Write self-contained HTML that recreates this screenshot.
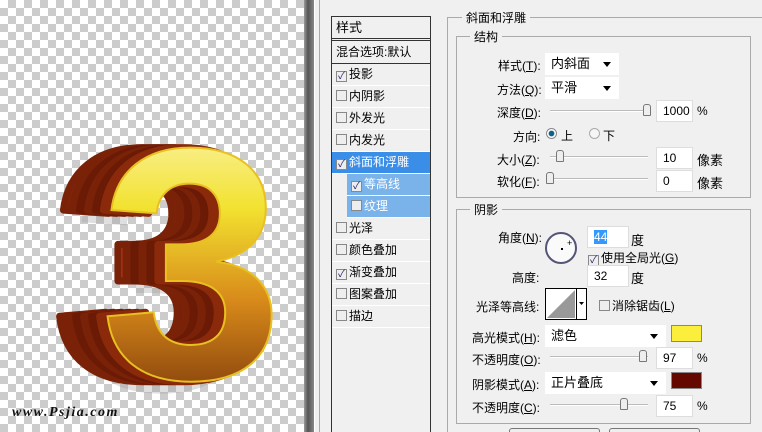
<html><head><style>
*{margin:0;padding:0;box-sizing:border-box}
body{width:762px;height:432px;overflow:hidden;position:relative;background:#f0f0f0;font-family:"Liberation Sans","Noto Sans CJK SC",sans-serif;font-size:12px;color:#000}
.chk{position:absolute;left:0;top:0;width:304px;height:432px;background-color:#fff;background-image:linear-gradient(45deg,#ccc 25%,transparent 25%,transparent 75%,#ccc 75%),linear-gradient(45deg,#ccc 25%,transparent 25%,transparent 75%,#ccc 75%);background-size:16px 16px;background-position:0 0,8px 8px}
.a{position:absolute;white-space:nowrap}
.list{position:absolute;left:331px;top:16px;width:100px;height:416px;border:1px solid #333;border-bottom:none;background:#f0f0f0}
.row{position:absolute;left:0;width:98px;height:22px;border-bottom:1px solid #fff;line-height:21px;padding-left:4px;font-size:12px}
.cb{display:inline-block;width:11px;height:11px;border:1px solid #888;background:#eee;vertical-align:-1px;margin-right:2px;font-size:10px;line-height:9px;text-align:center;color:#226}
.fs{position:absolute;border:1px solid #aaa}
.lg{position:absolute;background:#f0f0f0;padding:0 4px;font-size:12px}
.in{position:absolute;background:#fff;border:1px solid #ddd;height:22px;line-height:20px;padding-left:6px}
.sel{position:absolute;background:#fff;height:22px;line-height:21px;padding-left:6px;font-size:13px}
.sel:after{content:"";position:absolute;right:8px;top:9px;border:4px solid transparent;border-top:5px solid #000}
.sl{position:absolute;height:2px;background:#bbb;border-bottom:1px solid #fff}
.th{position:absolute;width:8px;height:12px;background:#eee;border:1px solid #777;border-radius:3px 3px 1px 1px}
</style></head><body>
<div class="chk"></div>
<svg class="a" style="left:0;top:0" width="304" height="432" font-family="Liberation Sans" font-weight="bold" font-size="330">
<defs>
<linearGradient id="f" x1="0" y1="0" x2="0" y2="1"><stop offset="0" stop-color="#fffbe0"/><stop offset=".35" stop-color="#f2e230"/><stop offset=".6" stop-color="#d88a1a"/><stop offset="1" stop-color="#5a1a05"/></linearGradient>
<linearGradient id="s" x1="0" y1="0" x2="1" y2="0"><stop offset="0" stop-color="#6a1505"/><stop offset=".3" stop-color="#d0401a"/><stop offset="1" stop-color="#3a0800"/></linearGradient>
</defs>
<text x="70" y="390" fill="#999" opacity=".3">3</text>
<g stroke-width="7" stroke-linejoin="round">
<text x="52" y="378" fill="url(#s)" stroke="#7a2208">3</text>
<text x="60" y="378" fill="#7a2208" stroke="#7a2208">3</text>
<text x="68" y="378" fill="#6a1a05" stroke="#6a1a05">3</text>
<text x="76" y="378" fill="#7a2208" stroke="#7a2208">3</text>
<text x="84" y="378" fill="#6a1a05" stroke="#6a1a05">3</text>
<text x="92" y="378" fill="#8a2a0a" stroke="#8a2a0a">3</text>
</g>
<text x="100" y="378" fill="url(#f)" stroke="#e8c020" stroke-width="2">3</text>
<text x="12" y="416" font-family="Liberation Serif" font-style="italic" font-size="14" fill="#111" letter-spacing="1.5">www.Psjia.com</text>
</svg>
<div class="a" style="left:304px;top:0;width:10px;height:432px;background:linear-gradient(90deg,#999,#555 40%,#888)"></div>
<div class="a" style="left:314px;top:0;width:448px;height:432px;background:#f0f0f0;border-left:1px solid #fff"></div>
<div class="a" style="left:319px;top:0;width:1px;height:432px;background:#aaa"></div>
<div class="list">
<div class="row" style="top:0;height:24px;border-bottom:3px double #333;font-size:13px;line-height:22px">样式</div>
<div class="row" style="top:25px;border-bottom:1px solid #333">混合选项:默认</div>
<div class="row" style="top:47px"><span class="cb">✓</span>投影</div>
<div class="row" style="top:69px"><span class="cb"></span>内阴影</div>
<div class="row" style="top:91px"><span class="cb"></span>外发光</div>
<div class="row" style="top:113px"><span class="cb"></span>内发光</div>
<div class="row" style="top:135px;background:#3a8ee8;color:#fff"><span class="cb">✓</span>斜面和浮雕</div>
<div class="row" style="top:157px;left:15px;width:83px;background:#7ab2ea;color:#fff"><span class="cb">✓</span>等高线</div>
<div class="row" style="top:179px;left:15px;width:83px;background:#7ab2ea;color:#fff"><span class="cb"></span>纹理</div>
<div class="row" style="top:201px"><span class="cb"></span>光泽</div>
<div class="row" style="top:223px"><span class="cb"></span>颜色叠加</div>
<div class="row" style="top:245px"><span class="cb">✓</span>渐变叠加</div>
<div class="row" style="top:267px"><span class="cb"></span>图案叠加</div>
<div class="row" style="top:289px"><span class="cb"></span>描边</div>
</div>
<div class="fs" style="left:447px;top:17px;width:315px;height:415px;border-right:none;border-bottom:none"></div>
<div class="lg" style="left:462px;top:9px">斜面和浮雕</div>
<div class="fs" style="left:456px;top:36px;width:295px;height:162px"></div>
<div class="lg" style="left:470px;top:28px">结构</div>
<div class="a" style="left:498px;top:57px">样式(<u>T</u>):</div>
<div class="sel" style="left:545px;top:53px;width:74px">内斜面</div>
<div class="a" style="left:497px;top:81px">方法(<u>Q</u>):</div>
<div class="sel" style="left:545px;top:77px;width:74px">平滑</div>
<div class="a" style="left:497px;top:104px">深度(<u>D</u>):</div>
<div class="sl" style="left:550px;top:110px;width:100px"></div><div class="th" style="left:643px;top:104px"></div>
<div class="in" style="left:656px;top:100px;width:37px">1000</div><div class="a" style="left:697px;top:104px">%</div>
<div class="a" style="left:513px;top:128px">方向:</div>
<div class="a" style="left:546px;top:128px;width:11px;height:11px;border-radius:50%;border:1px solid #888;background:radial-gradient(#13608a 40%,#fff 50%)"></div><div class="a" style="left:561px;top:127px">上</div>
<div class="a" style="left:589px;top:128px;width:11px;height:11px;border-radius:50%;border:1px solid #aaa;background:#f6f6f6"></div><div class="a" style="left:603px;top:127px">下</div>
<div class="a" style="left:497px;top:151px">大小(<u>Z</u>):</div>
<div class="sl" style="left:550px;top:156px;width:98px"></div><div class="th" style="left:556px;top:150px"></div>
<div class="in" style="left:656px;top:147px;width:37px">10</div><div class="a" style="left:697px;top:150px;font-size:13px">像素</div>
<div class="a" style="left:497px;top:173px">软化(<u>F</u>):</div>
<div class="sl" style="left:550px;top:178px;width:98px"></div><div class="th" style="left:546px;top:172px"></div>
<div class="in" style="left:656px;top:170px;width:37px">0</div><div class="a" style="left:697px;top:173px;font-size:13px">像素</div>
<div class="fs" style="left:456px;top:209px;width:295px;height:215px"></div>
<div class="lg" style="left:470px;top:201px">阴影</div>
<div class="a" style="left:498px;top:229px">角度(<u>N</u>):</div>
<div class="a" style="left:545px;top:232px;width:32px;height:32px;border-radius:50%;border:2px solid #557;background:#fafafa"></div>
<div class="a" style="left:561px;top:248px;width:2px;height:2px;background:#000"></div><div class="a" style="left:567px;top:238px;font-size:9px">+</div>
<div class="in" style="left:587px;top:226px;width:42px"><span style="background:#39f;color:#fff">44</span></div><div class="a" style="left:631px;top:230px;font-size:13px">度</div>
<div class="a" style="left:588px;top:249px"><span class="cb">✓</span>使用全局光(<u>G</u>)</div>
<div class="a" style="left:512px;top:269px">高度:</div>
<div class="in" style="left:587px;top:265px;width:42px">32</div><div class="a" style="left:631px;top:268px;font-size:13px">度</div>
<div class="a" style="left:476px;top:298px">光泽等高线:</div>
<svg class="a" style="left:545px;top:288px" width="42" height="32"><rect x=".5" y=".5" width="41" height="31" fill="#fff" stroke="#000"/><path d="M2 30L30 2V30Z" fill="#999"/><line x1="31.5" y1="0" x2="31.5" y2="32" stroke="#000"/><path d="M34 14h5l-2.5 3z" fill="#000"/></svg>
<div class="a" style="left:599px;top:297px"><span class="cb"></span>消除锯齿(<u>L</u>)</div>
<div class="a" style="left:472px;top:329px">高光模式(<u>H</u>):</div>
<div class="sel" style="left:545px;top:325px;width:121px">滤色</div>
<div class="a" style="left:671px;top:325px;width:31px;height:17px;background:#fbef3c;border:1px solid #888"></div>
<div class="a" style="left:472px;top:351px">不透明度(<u>O</u>):</div>
<div class="sl" style="left:550px;top:356px;width:98px"></div><div class="th" style="left:639px;top:350px"></div>
<div class="in" style="left:656px;top:347px;width:37px">97</div><div class="a" style="left:697px;top:351px">%</div>
<div class="a" style="left:472px;top:376px">阴影模式(<u>A</u>):</div>
<div class="sel" style="left:545px;top:372px;width:121px">正片叠底</div>
<div class="a" style="left:671px;top:372px;width:31px;height:17px;background:#650800;border:1px solid #888"></div>
<div class="a" style="left:472px;top:399px">不透明度(<u>C</u>):</div>
<div class="sl" style="left:550px;top:404px;width:98px"></div><div class="th" style="left:620px;top:398px"></div>
<div class="in" style="left:656px;top:395px;width:37px">75</div><div class="a" style="left:697px;top:399px">%</div>
<div class="a" style="left:509px;top:428px;width:91px;height:4px;border:1px solid #777;border-bottom:none;border-radius:3px 3px 0 0;background:#eee"></div>
<div class="a" style="left:609px;top:428px;width:91px;height:4px;border:1px solid #777;border-bottom:none;border-radius:3px 3px 0 0;background:#eee"></div>
</body></html>
